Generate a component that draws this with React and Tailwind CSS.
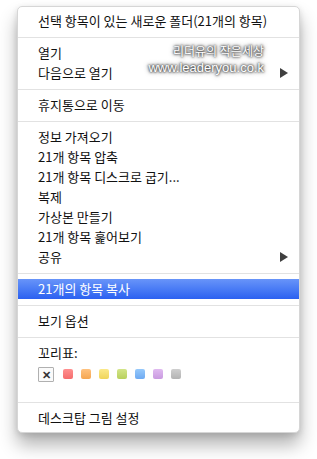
import React from "react";

const font = { fontFamily: '"Noto Sans CJK KR", "Noto Sans", sans-serif' };

function Row({ children, arrow, highlight }) {
  return (
    <div
      className={
        "flex h-[20px] items-center justify-between pl-[20px] pr-[10px] text-[13px] leading-[20px] " +
        (highlight ? "bg-gradient-to-b from-[#6894f9] to-[#2b60f0] text-white" : "text-[#111]")
      }
    >
      <span>{children}</span>
      {arrow && (
        <svg width="8" height="10" viewBox="0 0 8 10" className="mr-px">
          <path d="M0 0 L8 5 L0 10 Z" fill="#3f3f3f" />
        </svg>
      )}
    </div>
  );
}

function Sep() {
  return (
    <div className="pt-[6px] pb-[5px]">
      <div className="h-px bg-[#e2e2e2]" />
    </div>
  );
}

const swatches = [
  ["#ff9090", "#f56c6c"],
  ["#ffc27f", "#f5a650"],
  ["#fbe98a", "#efd45a"],
  ["#d3e589", "#b8d05c"],
  ["#96c9fb", "#6eaaf2"],
  ["#e0baf0", "#c99ae0"],
  ["#cfcfcf", "#b3b3b3"],
];

export default function App() {
  return (
    <div className="h-[459px] w-[317px] bg-white pl-[17px] pt-[6px]" style={font}>
      <div className="relative w-[283px] overflow-hidden rounded-[5px] border border-[#d6d6d6] bg-white pt-[4px] pb-[4px] shadow-[0_12px_18px_rgba(0,0,0,0.3),0_2px_6px_rgba(0,0,0,0.12)]">
        <Row>선택 항목이 있는 새로운 폴더(21개의 항목)</Row>
        <Sep />
        <Row>열기</Row>
        <Row arrow>다음으로 열기</Row>
        <Sep />
        <Row>휴지통으로 이동</Row>
        <Sep />
        <Row>정보 가져오기</Row>
        <Row>21개 항목 압축</Row>
        <Row>21개 항목 디스크로 굽기...</Row>
        <Row>복제</Row>
        <Row>가상본 만들기</Row>
        <Row>21개 항목 훑어보기</Row>
        <Row arrow>공유</Row>
        <Sep />
        <Row highlight>21개의 항목 복사</Row>
        <Sep />
        <Row>보기 옵션</Row>
        <Sep />
        <Row>꼬리표:</Row>
        <div className="flex h-[33px] items-start pl-[20px] pt-[4px]">
          <div className="flex h-[15px] w-[16px] items-center justify-center rounded-[1px] border border-[#b0b0b0] bg-[#fafafa] text-[11px] font-bold leading-none text-[#333]">
            ✕
          </div>
          <div className="ml-[9px] mt-[2px] flex gap-[8px]">
            {swatches.map(([a, b], i) => (
              <div
                key={i}
                className="h-[10px] w-[10px] rounded-[2px]"
                style={{ background: `linear-gradient(${a}, ${b})` }}
              />
            ))}
          </div>
        </div>
        <Sep />
        <Row>데스크탑 그림 설정</Row>

        <div className="pointer-events-none absolute left-[130px] top-[36px] flex w-[116px] flex-col items-end text-white [text-shadow:0_0_3px_#444,0_0_5px_#555,0_0_2px_#333]">
          <div className="text-[12px] leading-[16px]" style={{ fontFamily: '"Noto Sans CJK KR", sans-serif' }}>리더유의 작은세상</div>
          <div className="mt-[1px] whitespace-nowrap text-[13px] leading-[16px]" style={{ fontFamily: '"Liberation Sans", sans-serif' }}>www.leaderyou.co.k</div>
        </div>
      </div>
    </div>
  );
}
